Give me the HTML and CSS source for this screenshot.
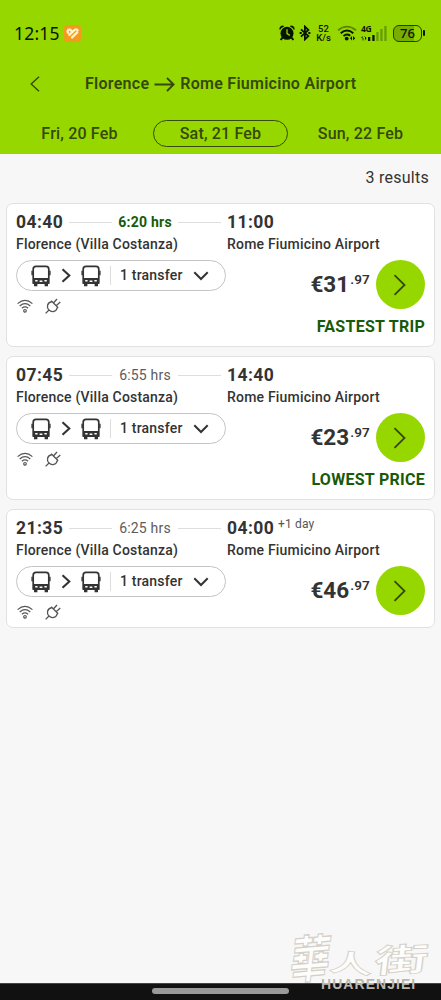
FILE: index.html
```html
<!DOCTYPE html>
<html lang="en">
<head>
<meta charset="utf-8">
<title>Florence to Rome Fiumicino Airport</title>
<link rel="stylesheet" href="styles.css">
</head>
<body>
<svg class="defs" aria-hidden="true">
  <symbol id="bus" viewBox="0 0 20 22"><path d="M2.2 18V4.2Q2.2 1.4 5 1.4H15Q17.8 1.4 17.8 4.2V18Z" fill="none" stroke="#333" stroke-width="1.7"/><path d="M2 13H18V18.9H2Z" fill="#333"/><path d="M3 18H6.4V21.2H3ZM13.6 18H17V21.2H13.6ZM.4 5.8H1.8V10.2H.4ZM18.2 5.8H19.6V10.2H18.2Z" fill="#333"/><path d="M4.2 15.7H6.6M8.6 16.3H11.4M13.4 15.7H15.8" stroke="#fff" stroke-width="1.6"/></symbol>
  <symbol id="next" viewBox="0 0 10 15"><path d="M1.5 1.3 8.3 7.5 1.5 13.7" fill="none" stroke="#333" stroke-width="2.1"/></symbol>
  <symbol id="down" viewBox="0 0 16 10"><path d="M1.3 1.3 8 8 14.7 1.3" fill="none" stroke="#333" stroke-width="2"/></symbol>
  <symbol id="go" viewBox="0 0 14 22"><path d="M1.5 1.2 11.5 11 1.5 20.8" fill="none" stroke="#34490a" stroke-width="1.8"/></symbol>
  <symbol id="wifi" viewBox="0 0 16 14"><g fill="none" stroke="#555" stroke-width="1.2"><path d="M.6 4.6Q8-1.8 15.4 4.6M2.7 7Q8 2.4 13.3 7M4.9 9.2Q8 6.6 11.1 9.2"/><circle cx="8" cy="11.8" r="1.3"/></g></symbol>
  <symbol id="plug" viewBox="0 0 16 16"><g fill="none" stroke="#555" stroke-width="1.3"><path d="M.6 15.4 4 12M6.2 2.8 13.2 9.8M6.9 3.5C1.8 4.8 1.4 9.4 4 12C6.6 14.6 11.3 14.1 12.5 9.1M8.6 4.8 12 1M11.4 7.6 15.3 4.1"/></g></symbol>
</svg>
<div class="screen">
  <header class="header">
    <div class="status">
      <span class="clock">12:15</span>
      <svg class="app" viewBox="0 0 18 18"><rect width="18" height="18" rx="4" fill="#f49a1c"/><g fill="none" stroke="#fff2cf" stroke-width="2.5" stroke-linecap="round"><path d="M4.3 8.2Q3.2 6.2 4.6 5.1Q6 4.2 7.7 6M5.6 10.6 11 5.4Q13.2 3.7 14.4 5.6M8.5 13.2 14 7.9"/></g></svg>
      <svg class="alarm" viewBox="0 0 16 16"><path d="M.3 4.4Q.4.9 4.3.6L5 1.7Q2.3 2.4 1.2 4.8ZM15.7 4.4Q15.6.9 11.7.6L11 1.7Q13.7 2.4 14.8 4.8Z" fill="#071500"/><circle cx="8" cy="8.3" r="6.5" fill="#071500"/><path d="M3.5 12.6 1.6 15M12.5 12.6 14.4 15" stroke="#071500" stroke-width="2"/><path d="M8 4.3V8.6L10.8 10.4" fill="none" stroke="#96d500" stroke-width="1.3"/></svg>
      <svg class="bluetooth" viewBox="0 0 12 16"><path d="M2 4.3 9.4 11 5.9 14.4V1.6L9.4 5 2 11.7" fill="none" stroke="#071500" stroke-width="1.8"/><path d="M.6 8H2.7M9.3 8H11.4" stroke="#071500" stroke-width="2"/></svg>
      <span class="speed"><span>52</span><span>K/s</span></span>
      <svg class="net-wifi" viewBox="0 0 20 16"><path d="M1 5.3Q10-2 19 5.3" fill="none" stroke="#598500" stroke-width="1.8"/><path d="M3.7 8.3Q10 2.8 16.3 8.3M6.5 11Q10 8.2 13.2 10.8" fill="none" stroke="#071500" stroke-width="1.9"/><circle cx="9.7" cy="13.6" r="1.9" fill="#071500"/><path d="M13 13.3 15 11V15.6ZM16 11V15.6L18.2 13.3Z" fill="#071500"/></svg>
      <span class="cell"><span>4G</span><svg viewBox="0 0 26 16"><path d="M0 13 1.6 11V15.5H2.4V13M5.5 13 4 15.5V11H3.2" fill="#071500"/><path d="M7 12H9.3V16H7ZM11.3 10H13.6V16H11.3Z" fill="#071500"/><path d="M15.3 7H17.6V16H15.3ZM19.3 4H21.6V16H19.3ZM23.3 1H25.6V16H23.3Z" fill="#679d00"/></svg></span>
      <span class="battery">76</span>
    </div>
    <div class="route">
      <svg class="back" viewBox="0 0 10 16"><path d="M9 .8 1.2 8 9 15.2" fill="none" stroke="#34490a" stroke-width="1.4"/></svg>
      <h1><span class="origin">Florence</span><svg class="arrow" viewBox="0 0 21 15"><path d="M.5 7.5H19.5M13 1 19.6 7.5 13 14" fill="none" stroke="#34490a" stroke-width="1.8"/></svg><span class="destination">Rome Fiumicino Airport</span></h1>
    </div>
    <nav class="dates"><span class="date">Fri, 20 Feb</span><span class="date selected">Sat, 21 Feb</span><span class="date">Sun, 22 Feb</span></nav>
  </header>
  <main>
    <p class="results">3 results</p>
    <article class="card">
      <div class="times"><b class="time">04:40</b><i></i><span class="duration fast">6:20 hrs</span><i></i><b class="time arrive">11:00</b></div>
      <div class="places"><span>Florence (Villa Costanza)</span><span>Rome Fiumicino Airport</span></div>
      <div class="details"><div><div class="pill"><svg class="bus"><use href="#bus"/></svg><svg class="next"><use href="#next"/></svg><svg class="bus"><use href="#bus"/></svg><span class="transfer">1 transfer</span><svg class="down"><use href="#down"/></svg></div><div class="amenities"><svg><use href="#wifi"/></svg><svg><use href="#plug"/></svg></div></div>
      <div class="booking"><div class="price">€31<sup>.97</sup></div><button aria-label="Select"><svg><use href="#go"/></svg></button></div></div>
      <div class="tag">FASTEST TRIP</div>
    </article>
    <article class="card">
      <div class="times"><b class="time">07:45</b><i></i><span class="duration">6:55 hrs</span><i></i><b class="time arrive">14:40</b></div>
      <div class="places"><span>Florence (Villa Costanza)</span><span>Rome Fiumicino Airport</span></div>
      <div class="details"><div><div class="pill"><svg class="bus"><use href="#bus"/></svg><svg class="next"><use href="#next"/></svg><svg class="bus"><use href="#bus"/></svg><span class="transfer">1 transfer</span><svg class="down"><use href="#down"/></svg></div><div class="amenities"><svg><use href="#wifi"/></svg><svg><use href="#plug"/></svg></div></div>
      <div class="booking"><div class="price">€23<sup>.97</sup></div><button aria-label="Select"><svg><use href="#go"/></svg></button></div></div>
      <div class="tag">LOWEST PRICE</div>
    </article>
    <article class="card short">
      <div class="times"><b class="time">21:35</b><i></i><span class="duration">6:25 hrs</span><i></i><b class="time arrive">04:00</b><span class="day">+1 day</span></div>
      <div class="places"><span>Florence (Villa Costanza)</span><span>Rome Fiumicino Airport</span></div>
      <div class="details"><div><div class="pill"><svg class="bus"><use href="#bus"/></svg><svg class="next"><use href="#next"/></svg><svg class="bus"><use href="#bus"/></svg><span class="transfer">1 transfer</span><svg class="down"><use href="#down"/></svg></div><div class="amenities"><svg><use href="#wifi"/></svg><svg><use href="#plug"/></svg></div></div>
      <div class="booking"><div class="price">€46<sup>.97</sup></div><button aria-label="Select"><svg><use href="#go"/></svg></button></div></div>
    </article>
  </main>
  <footer class="gesture"><span></span></footer>
  <div class="watermark"><div class="mark-cjk"><span class="hua">華</span><span class="ren">人</span><span class="jie">街</span></div><div class="mark-latin">HUARENJIEI</div></div>
</div>
</body>
</html>
```
FILE: styles.css
```css
* { box-sizing: border-box; }
body { margin: 0; font-family: Roboto, sans-serif; color: #333; background: #f7f7f7; }
svg { display: block; flex: none; }
.defs { width: 0; height: 0; position: absolute; }
.screen { position: relative; width: 441px; height: 1000px; display: flex; flex-direction: column; overflow: hidden; }
.header { height: 154px; background: #97d700; color: #34490a; }
.status { height: 66px; padding-left: 14px; display: flex; align-items: center; color: #071500; font-family: "Noto Sans", sans-serif; }
.clock { width: 46px; font-size: 17.5px; letter-spacing: .2px; white-space: nowrap; }
.app { width: 17px; height: 17px; margin-left: 4px; }
.alarm { width: 16px; height: 16px; margin-left: 198px; }
.bluetooth { width: 12px; height: 16px; margin-left: 4px; }
.speed { width: 17px; margin-left: 4px; display: grid; gap: 0; justify-items: center; font-family: Roboto, sans-serif; font-size: 9.5px; line-height: 9.5px; font-weight: 500; white-space: nowrap; }
.net-wifi { width: 20px; height: 16px; margin-left: 5px; }
.cell { position: relative; width: 27px; height: 16px; margin-left: 4px; }
.cell span { position: absolute; left: 0; top: 0; font-size: 8.5px; line-height: 8px; font-weight: 700; letter-spacing: -.3px; }
.cell svg { width: 26px; height: 16px; }
.battery { position: relative; width: 29px; height: 17px; margin-left: 5px; border: 1.5px solid #253b00; border-radius: 6px; background: linear-gradient(90deg, #79ae00 75%, #96d500 75%); font-size: 13px; line-height: 14px; text-align: center; font-weight: 500; }
.battery::after { content: ""; position: absolute; right: -4px; top: 4px; width: 2px; height: 6px; border-radius: 1px; background: #071500; }
.route { height: 36px; display: flex; align-items: center; padding-left: 30px; }
.back { width: 10px; height: 16px; }
h1 { display: flex; align-items: center; margin: 0 0 0 45px; font-size: 16px; line-height: 20px; font-weight: 600; letter-spacing: .27px; white-space: nowrap; }
.arrow { width: 21px; height: 15px; margin: 0 5px 0 5px; }
.dates { display: flex; align-items: center; height: 27px; margin: 18px 13px 0 12px; }
.date { flex: 1; height: 27px; line-height: 27px; text-align: center; font-size: 16px; font-weight: 500; letter-spacing: .18px; }
.date:first-child { flex: 0 0 138px; padding-right: 3px; }
.date:last-child { padding-left: 2px; }
.date.selected { flex: 0 0 135px; margin: 0 3px; border: 1px solid #34490a; border-radius: 14px; line-height: 26px; }
main { flex: 1; padding: 0 6px; }
.results { margin: 0 6px 0 0; height: 49px; line-height: 47px; text-align: right; font-size: 16px; letter-spacing: .25px; }
.card { height: 144px; margin-bottom: 9px; padding: 8px 9px 0; border: 1px solid #e1e1e1; border-radius: 7px; background: #fff; }
.card.short { height: 119px; }
.times { height: 20px; display: flex; align-items: center; white-space: nowrap; }
.time { width: 47px; font-size: 17.5px; font-weight: 700; letter-spacing: .4px; }
.times i { flex: 0 0 43px; height: 1px; background: #dedede; margin-left: 6px; }
.times .duration { width: 66px; text-align: center; font-size: 14px; letter-spacing: .2px; color: #5c5c5c; }
.times .duration + i { margin: 0; }
.times .fast { font-weight: 700; letter-spacing: .25px; color: #185a08; }
.arrive { margin-left: 6px; }
.day { margin: -8px 0 0 4px; font-size: 12px; letter-spacing: .15px; color: #555; }
.places { display: grid; grid-template-columns: 211px 1fr; height: 28px; line-height: 25px; font-size: 14px; font-weight: 500; letter-spacing: .2px; white-space: nowrap; }
.details { display: flex; justify-content: space-between; }
.pill { width: 210px; height: 31px; display: flex; align-items: center; padding-left: 14px; border: 1px solid #c4c4c4; border-radius: 16px; }
.bus { width: 20px; height: 22px; }
.next { width: 10px; height: 15px; margin: 0 10px; }
.transfer { height: 19px; line-height: 19px; margin-left: 9px; padding-left: 9px; border-left: 1px solid #ddd; font-size: 14px; font-weight: 500; letter-spacing: .2px; white-space: nowrap; }
.down { width: 16px; height: 10px; margin-left: 10px; }
.amenities { display: flex; gap: 12px; padding: 7px 0 0 1px; }
.amenities svg { width: 16px; height: 16px; }
.booking { display: flex; align-items: center; height: 49px; }
.price { display: flex; margin-top: -2px; font-size: 22.5px; line-height: 28px; font-weight: 700; }
.price sup { font-size: 13.5px; line-height: 16px; font-weight: 600; letter-spacing: .2px; margin: 1px 0 0 1px; }
button { width: 49px; height: 49px; margin-left: 6px; padding: 0 1px 0 0; display: grid; place-items: center; border: 0; border-radius: 50%; background: #97d700; }
button svg { width: 14px; height: 22px; }
.tag { margin-top: 3px; text-align: right; color: #185a08; font-size: 16px; line-height: 20px; font-weight: 700; letter-spacing: .28px; }
.gesture { height: 17px; padding-top: 4px; background: #111; border-top: 1px solid #444; }
.gesture span { display: block; width: 137px; height: 6px; margin: 0 0 0 152px; border-radius: 3px; background: #999; }
.watermark { position: absolute; left: 291px; top: 929px; width: 145px; height: 65px; color: #fdfdfc; }
.mark-cjk { display: flex; height: 51px; align-items: center; font-family: "Noto Sans CJK TC", sans-serif; font-size: 40px; line-height: 50px; font-weight: 700; -webkit-text-stroke: 1px #d4d0c9; }
.mark-cjk span { display: block; width: 40px; }
.mark-cjk .hua { transform: translateY(1px) rotate(-5deg) skewX(-12deg) scaleY(1.25); }
.mark-cjk .ren { transform: translateY(7px) rotate(5deg) scale(1.08, .62); }
.mark-cjk .jie { margin-left: 11px; transform: translateY(3px) rotate(-3deg) skewX(-10deg) scale(1.35, .8); }
.mark-latin { position: absolute; left: 30px; top: 47px; color: #bbb8b0; font-family: "Liberation Sans", sans-serif; font-size: 14px; line-height: 17px; font-weight: 700; letter-spacing: 1.05px; }
```
